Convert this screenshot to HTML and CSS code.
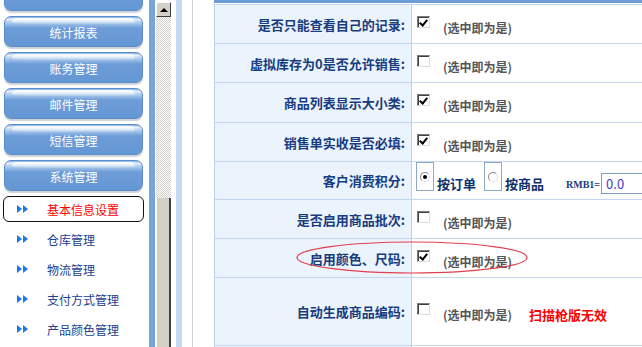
FILE: index.html
```html
<!DOCTYPE html>
<html lang="zh-CN">
<head>
    <meta charset="UTF-8">
    <title>基本信息设置</title>
    <link rel="stylesheet" href="styles.css">
</head>
<body>
    <div class="page">
        <aside class="side">
            <div class="nav-btn first">会员管理</div>
            <div class="nav-btn">统计报表</div>
            <div class="nav-btn">账务管理</div>
            <div class="nav-btn">邮件管理</div>
            <div class="nav-btn">短信管理</div>
            <div class="nav-btn">系统管理</div>

            <div class="sub active"><svg class="arrow" width="12" height="8" viewBox="0 0 12 8"><path d="M0 0L5 4L0 8ZM6 0L11 4L6 8Z" fill="#1a78e8"/></svg>基本信息设置</div>
            <div class="sub"><svg class="arrow" width="12" height="8" viewBox="0 0 12 8"><path d="M0 0L5 4L0 8ZM6 0L11 4L6 8Z" fill="#1a78e8"/></svg>仓库管理</div>
            <div class="sub"><svg class="arrow" width="12" height="8" viewBox="0 0 12 8"><path d="M0 0L5 4L0 8ZM6 0L11 4L6 8Z" fill="#1a78e8"/></svg>物流管理</div>
            <div class="sub"><svg class="arrow" width="12" height="8" viewBox="0 0 12 8"><path d="M0 0L5 4L0 8ZM6 0L11 4L6 8Z" fill="#1a78e8"/></svg>支付方式管理</div>
            <div class="sub"><svg class="arrow" width="12" height="8" viewBox="0 0 12 8"><path d="M0 0L5 4L0 8ZM6 0L11 4L6 8Z" fill="#1a78e8"/></svg>产品颜色管理</div>
        </aside>

        <div class="strip"></div>

        <div class="scroll">
            <div class="scroll-up"><span class="tri"></span></div>
            <div class="scroll-track"></div>
            <div class="scroll-thumb"></div>
        </div>

        <div class="gutter"></div>

        <main class="main">
            <div class="topbar"></div>
            <div class="settings">
                <div class="row">
                    <div class="label">是否只能查看自己的记录:</div>
                    <div class="value"><div class="opt"><span class="ck on"></span><span class="hint">(选中即为是)</span></div></div>
                </div>
                <div class="row">
                    <div class="label">虚拟库存为0是否允许销售:</div>
                    <div class="value"><div class="opt"><span class="ck"></span><span class="hint">(选中即为是)</span></div></div>
                </div>
                <div class="row h40">
                    <div class="label">商品列表显示大小类:</div>
                    <div class="value"><div class="opt"><span class="ck on"></span><span class="hint">(选中即为是)</span></div></div>
                </div>
                <div class="row">
                    <div class="label">销售单实收是否必填:</div>
                    <div class="value"><div class="opt"><span class="ck on"></span><span class="hint">(选中即为是)</span></div></div>
                </div>
                <div class="row h38">
                    <div class="label">客户消费积分:</div>
                    <div class="value points">
                        <span class="radio-box"><span class="radio on"></span></span>
                        <span class="choice">按订单</span>
                        <span class="radio-box"><span class="radio"></span></span>
                        <span class="choice">按商品</span>
                        <span class="rmb">RMB1=</span>
                        <span class="field">0.0</span>
                    </div>
                </div>
                <div class="row">
                    <div class="label">是否启用商品批次:</div>
                    <div class="value"><div class="opt"><span class="ck"></span><span class="hint">(选中即为是)</span></div></div>
                </div>
                <div class="row">
                    <div class="label">启用颜色、尺码:</div>
                    <div class="value"><div class="opt"><span class="ck on"></span><span class="hint">(选中即为是)</span></div></div>
                </div>
                <div class="row h68">
                    <div class="label">自动生成商品编码:</div>
                    <div class="value"><div class="opt"><span class="ck"></span><span class="hint">(选中即为是)</span><span class="warn">扫描枪版无效</span></div></div>
                </div>
                <div class="row">
                    <div class="label"></div>
                    <div class="value"></div>
                </div>
            </div>
        </main>

        <svg class="mark" width="232" height="33" viewBox="0 0 232 33">
            <ellipse cx="116" cy="16.5" rx="115" ry="15.5" fill="none" stroke="#e2404f" stroke-width="1.2"/>
        </svg>
    </div>
</body>
</html>
```

FILE: styles.css
```css
body {
    margin: 0;
    background: #fff;
    font-family: "Noto Sans CJK SC", "Noto Sans", sans-serif;
}

.page {
    position: relative;
    display: flex;
    width: 642px;
    height: 347px;
    overflow: hidden;
}

/* left menu */
.side {
    width: 149px;
    flex: none;
    padding-left: 4px;
    box-sizing: border-box;
}

.nav-btn {
    position: relative;
    width: 139px;
    height: 31px;
    margin-bottom: 5px;
    box-sizing: border-box;
    border: 1px solid #5b8ccc;
    border-radius: 7px;
    background: linear-gradient(to bottom, #80aade 0, #e9f1fb 2px, #a9c7eb 6px, #6d9dd8 11px, #6597d4 100%);
    box-shadow: 0 2px 1px #cfd3d8;
    color: #fff;
    font-size: 12px;
    line-height: 31px;
    text-align: center;
}

.nav-btn::before {
    content: "";
    position: absolute;
    left: 7px;
    right: 7px;
    top: 1px;
    height: 6px;
    border-radius: 8px 8px 40% 40%;
    background: linear-gradient(to bottom, rgba(255,255,255,0.95), rgba(255,255,255,0.1));
}

.nav-btn.first {
    margin-top: -20px;
    line-height: 24px;
}

.sub {
    display: flex;
    align-items: center;
    height: 30px;
    margin-left: -4px;
    padding-left: 17px;
    font-size: 12px;
    color: #22408e;
}

.sub.active {
    height: 26px;
    width: 141px;
    margin: 2px 0 2px -1px;
    padding-left: 13px;
    box-sizing: border-box;
    border: 1px solid #111;
    border-radius: 6px;
    color: #f00;
}

.arrow {
    flex: none;
    margin-right: 18px;
}

/* frame strip + scrollbar */
.strip {
    width: 6px;
    flex: none;
    background: #77a5d9;
}

.scroll {
    width: 16px;
    flex: none;
    display: flex;
    flex-direction: column;
    background: #fff;
}

.scroll-up {
    height: 15px;
    margin: 2px 0 0 1px;
    width: 15px;
    box-sizing: border-box;
    background: #d4d0c8;
    border-top: 1px solid #fff;
    border-left: 1px solid #fff;
    border-right: 1px solid #404040;
    border-bottom: 1px solid #404040;
    display: flex;
    align-items: center;
    justify-content: center;
}

.tri {
    width: 0;
    height: 0;
    border-left: 4px solid transparent;
    border-right: 4px solid transparent;
    border-bottom: 4px solid #000;
}

.scroll-track {
    height: 181px;
    margin-left: 1px;
    background: repeating-conic-gradient(#d4d0c8 0 25%, #fff 0 50%) 0 0 / 2px 2px;
}

.scroll-thumb {
    flex: 1;
    margin-left: 1px;
    background: #d4d0c8;
    border-left: 1px solid #fff;
    border-right: 2px solid #404040;
}

.gutter {
    width: 43px;
    flex: none;
    background: linear-gradient(to right, #fff 0 5px, #c4daf1 5px 11px, #fff 11px 21px, #cfcfcf 21px 22px, #fff 22px);
}

/* settings table */
.main {
    flex: none;
    width: 460px;
}

.topbar {
    height: 3px;
    margin-bottom: 1px;
    background: #6d9dd6;
}

.settings {
    border-left: 1px solid #bcd2ec;
}

.row {
    display: grid;
    grid-template-columns: 197px 1fr;
    height: 39px;
    box-sizing: border-box;
    border-top: 1px solid #c3d8ef;
}

.row.h40 { height: 40px; }
.row.h38 { height: 38px; }
.row.h68 { height: 68px; }

.label {
    display: flex;
    align-items: center;
    justify-content: flex-end;
    padding-right: 6px;
    background: #ebf3fc;
    border-right: 1px solid #b9d0ea;
    color: #173c7f;
    font-size: 13px;
    font-weight: bold;
    white-space: nowrap;
}

.value {
    display: flex;
    align-items: center;
    padding-left: 5px;
    overflow: hidden;
    white-space: nowrap;
}

.opt {
    display: flex;
    align-items: flex-start;
    margin-top: 2px;
}

.ck {
    position: relative;
    flex: none;
    width: 13px;
    height: 12px;
    box-sizing: border-box;
    border-top: 1px solid #7a7a7a;
    border-left: 1px solid #7a7a7a;
    border-right: 1px solid #dcdcdc;
    border-bottom: 1px solid #dcdcdc;
    background: #fff;
    box-shadow: inset 1px 1px 0 #404040;
}

.ck.on::after {
    content: "";
    position: absolute;
    left: 3px;
    top: 1px;
    width: 3px;
    height: 6px;
    border-right: 2px solid #000;
    border-bottom: 2px solid #000;
    transform: rotate(40deg);
}

.hint {
    margin: 5px 0 0 13px;
    font-size: 12px;
    line-height: 14px;
    font-weight: bold;
    color: #555;
}

.warn {
    margin: 5px 0 0 17px;
    font-size: 13px;
    line-height: 14px;
    font-weight: bold;
    color: #f00;
}

.points {
    align-items: flex-end;
    padding-left: 4px;
    padding-bottom: 7px;
}

.radio-box {
    flex: none;
    align-self: flex-start;
    width: 18px;
    height: 29px;
    box-sizing: border-box;
    border: 1px solid #8fa8c4;
    padding: 9px 0 0 3px;
}

.radio {
    display: block;
    position: relative;
    width: 10px;
    height: 10px;
    border-radius: 50%;
    background: #fff;
    border: 1px solid #8a8a8a;
    border-right-color: #e0e0e0;
    border-bottom-color: #e0e0e0;
    box-sizing: border-box;
}

.radio.on::after {
    content: "";
    position: absolute;
    left: 2px;
    top: 2px;
    width: 4px;
    height: 4px;
    border-radius: 50%;
    background: #000;
}

.choice {
    flex: none;
    margin: 0 8px 0 3px;
    font-size: 13px;
    line-height: 16px;
    font-weight: bold;
    color: #0e306c;
}

.rmb {
    flex: none;
    margin-left: 14px;
    font-family: "Liberation Serif", serif;
    font-size: 10px;
    font-weight: bold;
    line-height: 14px;
    color: #173c7f;
}

.field {
    flex: none;
    width: 80px;
    height: 21px;
    margin-left: 1px;
    margin-bottom: -2px;
    padding-left: 4px;
    box-sizing: border-box;
    border: 1px solid #7f9db9;
    font-size: 13px;
    line-height: 19px;
    color: #4a36c8;
}

/* annotation */
.mark {
    position: absolute;
    left: 296px;
    top: 241px;
}
```
